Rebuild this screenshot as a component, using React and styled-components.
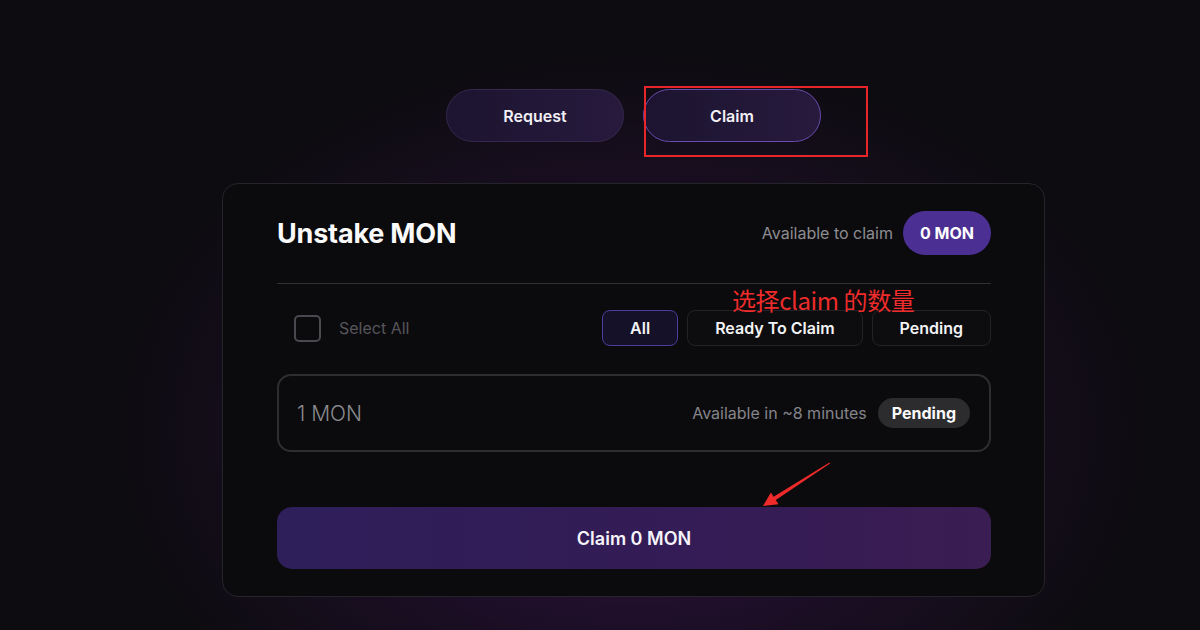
import styled, { createGlobalStyle } from "styled-components";

const Global = createGlobalStyle`
  html, body {
    margin: 0;
    padding: 0;
    background: #0d0c10;
  }
  * { box-sizing: border-box; }
`

const Page = styled.div`
  position: relative;
  width: 1200px;
  height: 630px;
  overflow: hidden;
  padding: 89px 0 0 67px;
  display: flex;
  flex-direction: column;
  align-items: center;
  font-family: Inter, "Noto Sans", "Noto Sans CJK SC", sans-serif;
  background:
    radial-gradient(ellipse 520px 380px at 633px 430px, rgba(62, 22, 82, 0.85), rgba(42, 16, 58, 0.45) 60%, rgba(13, 12, 16, 0) 100%),
    #0d0c10;
`

const Tabs = styled.div`
  position: relative;
  display: flex;
  gap: 19px;
`

const Tab = styled.button`
  width: 178px;
  height: 53px;
  border-radius: 27px;
  border: 1px solid ${p => (p.$active ? "#6a4bb0" : "#34284d")};
  background: linear-gradient(90deg, #1c1430 0%, #271a3d 100%);
  color: #f2f0f6;
  font-family: Inter, sans-serif;
  font-size: 16px;
  font-weight: 600;
  cursor: pointer;
`

const RedBox = styled.div`
  position: absolute;
  left: 198px;
  top: -3px;
  width: 224px;
  height: 71px;
  border: 2px solid #e8262a;
  pointer-events: none;
`

const Card = styled.div`
  position: relative;
  margin-top: 41px;
  width: 823px;
  height: 414px;
  border-radius: 16px;
  border: 1px solid #26242b;
  background: #0b0b0d;
  padding: 27px 53px 0 54px;
  display: flex;
  flex-direction: column;
`

const Header = styled.div`
  display: flex;
  align-items: center;
  justify-content: space-between;
  height: 44px;
`

const Title = styled.h1`
  margin: 0;
  font-size: 27px;
  font-weight: 700;
  color: #fafafa;
  letter-spacing: -0.2px;
`

const Avail = styled.div`
  display: flex;
  align-items: center;
  gap: 10px;
  font-size: 16px;
  color: #8e8d93;
`

const Badge = styled.span`
  height: 44px;
  padding: 0 17px;
  border-radius: 22px;
  background: #4b2f92;
  color: #fff;
  font-weight: 700;
  font-size: 16px;
  display: flex;
  align-items: center;
`

const Divider = styled.div`
  height: 1px;
  background: #303034;
  margin: 28px 0 26px;
`

const FilterRow = styled.div`
  display: flex;
  align-items: center;
  justify-content: space-between;
  height: 36px;
`

const SelectAll = styled.label`
  display: flex;
  align-items: center;
  gap: 18px;
  padding-left: 17px;
  color: #56555b;
  font-size: 16px;
`

const Check = styled.span`
  width: 27px;
  height: 27px;
  border-radius: 5px;
  border: 2px solid #4a494f;
`

const Filters = styled.div`
  display: flex;
  gap: 9px;
`

const Filter = styled.button`
  height: 36px;
  padding: 0 27px;
  border-radius: 8px;
  border: 1px solid ${p => (p.$active ? "#4d3c9c" : "#232227")};
  background: ${p => (p.$active ? "#141129" : "#0d0d0f")};
  color: #f3f3f5;
  font-family: Inter, sans-serif;
  font-weight: 600;
  font-size: 16px;
`

const Item = styled.div`
  margin-top: 28px;
  height: 78px;
  border-radius: 14px;
  border: 2px solid #2e2e32;
  display: flex;
  align-items: center;
  justify-content: space-between;
  padding: 0 19px 0 18px;
`

const Amount = styled.span`
  font-size: 21px;
  font-weight: 300;
  color: #8a8a8f;
`

const ItemRight = styled.div`
  display: flex;
  align-items: center;
  gap: 11px;
  font-size: 16px;
  color: #85848a;
`

const Status = styled.span`
  height: 30px;
  padding: 0 14px;
  border-radius: 15px;
  background: #2c2c2f;
  color: #fafafa;
  font-weight: 700;
  display: flex;
  align-items: center;
`

const ClaimButton = styled.button`
  margin-top: 55px;
  height: 62px;
  border: none;
  border-radius: 15px;
  background: linear-gradient(90deg, #2e1f5a 0%, #341c56 55%, #3a1d52 100%);
  color: #f6f4fa;
  font-family: Inter, sans-serif;
  font-weight: 600;
  font-size: 18px;
`

const Note = styled.span`
  position: absolute;
  left: 509px;
  top: 98px;
  color: #ef2b2b;
  font-size: 24px;
  font-family: "Noto Sans CJK SC", "Noto Sans", sans-serif;
  letter-spacing: -0.4px;
`

const Arrow = styled.svg`
  position: absolute;
  left: 530px;
  top: 270px;
  pointer-events: none;
`

export default function App() {
  return (
    <>
      <Global />
      <Page>
        <Tabs>
          <Tab>Request</Tab>
          <Tab $active>Claim</Tab>
          <RedBox />
        </Tabs>

        <Card>
          <Header>
            <Title>Unstake MON</Title>
            <Avail>
              Available to claim
              <Badge>0 MON</Badge>
            </Avail>
          </Header>
          <Divider />
          <FilterRow>
            <SelectAll>
              <Check />
              Select All
            </SelectAll>
            <Filters>
              <Filter $active>All</Filter>
              <Filter>Ready To Claim</Filter>
              <Filter>Pending</Filter>
            </Filters>
          </FilterRow>
          <Item>
            <Amount>1 MON</Amount>
            <ItemRight>
              Available in ~8 minutes
              <Status>Pending</Status>
            </ItemRight>
          </Item>
          <ClaimButton>Claim 0 MON</ClaimButton>

          <Note>选择claim 的数量</Note>
          <Arrow width="90" height="60" viewBox="0 0 90 60">
            <polygon points="76.5,8.5 77,9.5 22.8,46.1 25.5,50.3 10,52 17.9,38.5 20.6,42.7" fill="#ee2a2a" />
          </Arrow>
        </Card>
      </Page>
    </>
  )
}
